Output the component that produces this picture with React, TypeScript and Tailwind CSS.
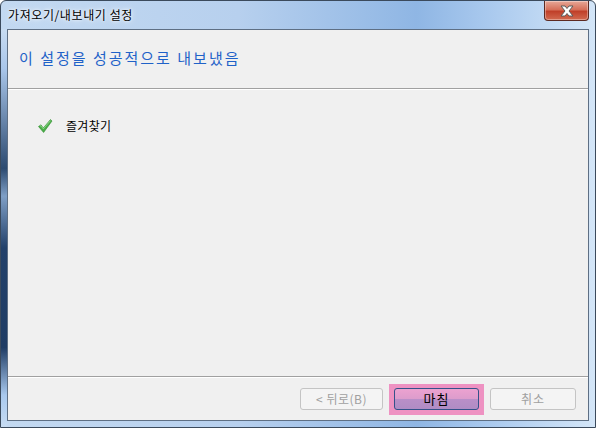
import React from 'react';

const font = { fontFamily: '"Noto Sans CJK KR", "Noto Sans", sans-serif' };

const CheckMark: React.FC = () => (
  <svg width="16" height="16" viewBox="0 0 16 16">
    <path d="M1.5 8.5 L4 6.8 L6.3 10 L13.5 1.5 L15 3 L6.6 14.5 Z" fill="#4cb04a" stroke="#2f8a2e" strokeWidth="0.6" strokeLinejoin="round" />
    <path d="M3 8.2 L4 7.6 L6.3 10.8 L13.5 2.6" fill="none" stroke="#9fe09a" strokeWidth="0.8" />
  </svg>
);

const CloseButton: React.FC = () => (
  <div className="w-[45px] h-[20px] rounded-b-[4px] border border-t-0 border-[#5c2a22] bg-[linear-gradient(to_bottom,#e7a898_0%,#d6705a_45%,#c0402a_55%,#d26a50_100%)] flex items-center justify-center shadow-[inset_0_0_0_1px_rgba(255,255,255,0.35)]">
    <svg width="16" height="12" viewBox="0 0 16 12">
      <path d="M2 1 L6 1 L8 3.5 L10 1 L14 1 L10 6 L14 11 L10 11 L8 8.5 L6 11 L2 11 L6 6 Z" fill="#ffffff" stroke="#5a5a5a" strokeWidth="1" strokeLinejoin="round" />
    </svg>
  </div>
);

const App: React.FC = () => {
  return (
    <div
      className="w-[596px] h-[428px] flex flex-col rounded-t-[6px] border border-[#3b4a5c] bg-[linear-gradient(to_right,#c3d9f1_0%,#b7d0ee_40%,#8fb6e4_70%,#a9c9ee_82%,#d4e6f8_100%)] overflow-hidden"
      style={font}
    >
      {/* title bar */}
      <div className="h-[28px] flex items-start justify-between pl-[7px] pr-[6px]">
        <span className="text-[12px] text-black mt-[6px] leading-[16px] tracking-[0.6px] [text-shadow:0_0_6px_#ffffff,0_0_3px_#ffffff]">
          가져오기/내보내기 설정
        </span>
        <CloseButton />
      </div>

      <div className="flex flex-1">
        {/* left frame strip */}
        <div className="w-[6px] bg-[linear-gradient(to_bottom,#c8dcf2_0%,#a9c6ea_10%,#2c4a70_35%,#7f9fc6_42%,#23416a_55%,#1f3c64_80%,#a9c9ee_92%,#c7dcf3_100%)]" />

        <div className="flex flex-col">
          {/* client area */}
          <div className="w-[582px] h-[392px] border border-[#5e6f84] bg-[#f0f0f0] flex flex-col">
            <div className="h-[58px] flex items-center pl-[11px] pb-[1px]">
              <span className="text-[15px] text-[#1f62c8] tracking-[2px]">이 설정을 성공적으로 내보냈음</span>
            </div>
            <div className="h-[2px] border-t border-[#a0a0a0] bg-white" />

            <div className="flex-1 flex flex-col">
              <div className="flex items-center pl-[29px] pt-[27px] gap-[13px]">
                <CheckMark />
                <span className="text-[12px] text-black tracking-[0.3px]">즐겨찾기</span>
              </div>
            </div>

            <div className="h-[2px] border-t border-[#a0a0a0] bg-white" />
            <div className="h-[42px] flex items-center justify-end pr-[12px] gap-[6px]">
              <button className="w-[83px] h-[22px] rounded-[3px] border border-[#c4c4c4] bg-[#f4f4f4] text-[12px] text-[#a0a0a0] tracking-[0.5px] flex items-center justify-center">
                &lt; 뒤로(B)
              </button>
              <div className="w-[95px] h-[31px] bg-[#ee92c2] flex items-center justify-center">
                <button className="w-[85px] h-[22px] rounded-[3px] border border-[#34528a] bg-[linear-gradient(to_bottom,#eca2d0_0%,#dc9ccc_50%,#b98fc8_52%,#b08cc4_100%)] text-[13px] text-black tracking-[1px] flex items-center justify-center">
                  마침
                </button>
              </div>
              <button className="w-[86px] h-[22px] rounded-[3px] border border-[#c4c4c4] bg-[#f4f4f4] text-[12px] text-[#a0a0a0] tracking-[1px] flex items-center justify-center">
                취소
              </button>
            </div>
          </div>
          <div className="flex-1" />
        </div>
      </div>
    </div>
  );
};

export default App;
